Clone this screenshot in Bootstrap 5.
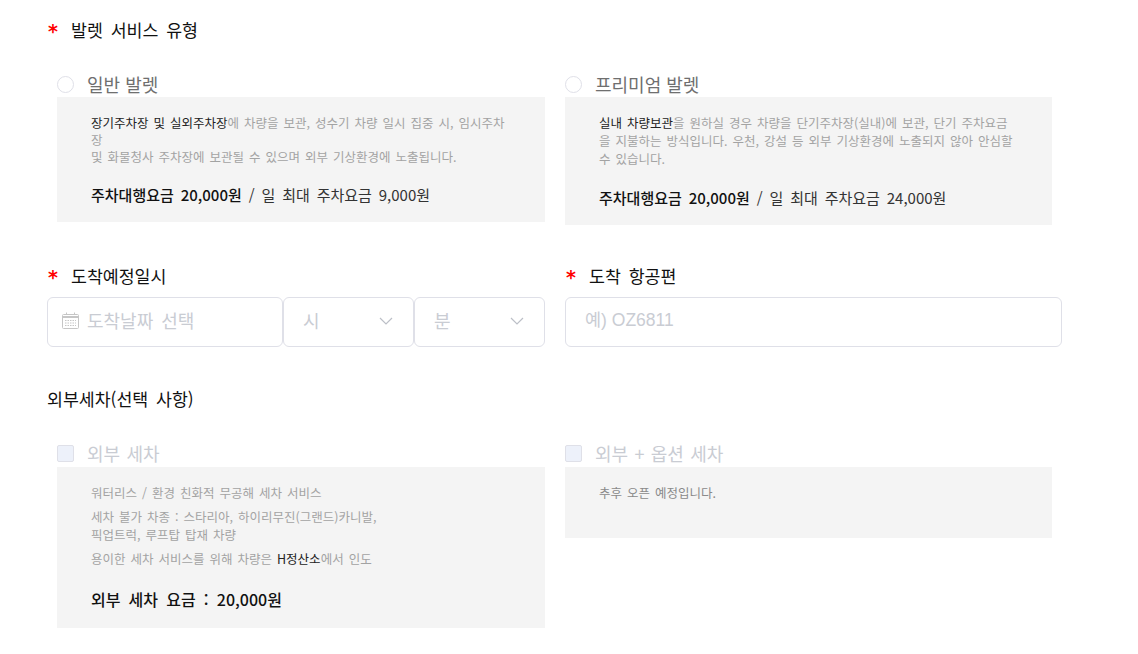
<!DOCTYPE html>
<html lang="ko">
  <head>
    <meta charset="UTF-8" />
    <title>발렛 서비스 예약</title>
    <link href="https://cdn.jsdelivr.net/npm/bootstrap@5.3.3/dist/css/bootstrap.min.css" rel="stylesheet" />
    <style>
      body {
        font-family: "Noto Sans CJK KR", "Liberation Sans", sans-serif;
        color: #111;
        background: #fff;
        overflow: hidden;
      }
      .page-wrap {
        width: 1015px;
        margin-left: 47px;
        padding-top: 17px;
      }
      .two-cols {
        display: grid;
        grid-template-columns: 498px 497px;
        column-gap: 20px;
      }
      .field-title {
        font-size: 17.3px;
        line-height: 26px;
        word-spacing: 3px;
        margin: 0;
      }
      .req-mark {
        color: #f00;
        display: inline-block;
        width: 24px;
        padding-left: 1px;
        font-family: "DejaVu Sans", sans-serif;
        font-weight: 700;
        font-size: 19px;
        line-height: 20px;
        vertical-align: -1px;
      }
      .opt-head {
        height: 24px;
        padding-bottom: 2px;
        font-size: 18px;
        line-height: 22px;
        color: #6f6f6f;
      }
      .first-col {
        margin-left: 10px;
      }
      .opt-head.off {
        padding-bottom: 4px;
        word-spacing: 1.3px;
        color: #c9ccd3;
      }
      .radio-mark, .check-mark {
        width: 17px;
        height: 17px;
        margin-right: 13px;
        border: 1px solid #dfe0e8;
        flex: none;
      }
      .radio-mark {
        border-radius: 50%;
      }
      .check-mark {
        border-radius: 2px;
        background: #edf1fa;
      }
      .opt-panel {
        background: #f4f4f4;
        font-size: 12.5px;
        line-height: 18px;
        word-spacing: 1.5px;
        color: #a3a3a3;
        padding: 17px 34px 0;
      }
      .last-col {
        margin-right: 10px;
      }
      .opt-panel b {
        font-weight: 400;
        color: #222;
      }
      .opt-panel p {
        margin: 0;
      }
      .opt-panel p.gap-after {
        margin-bottom: 6px;
      }
      .opt-panel p.fee-line {
        font-size: 15px;
        line-height: 22px;
        word-spacing: 2.7px;
        color: #333;
        margin-top: 19px;
      }
      .fee-line b {
        font-weight: 500;
        color: #111;
      }
      .opt-panel p.fee-wash {
        font-size: 16px;
        word-spacing: 3.7px;
        margin-top: 20px;
      }
      .wash-note {
        color: #8a8a8a;
      }
      .box-input {
        height: 50px;
        padding-bottom: 3px;
        border: 1px solid #dfe0e8;
        border-radius: 6px;
        font-size: 18px;
        word-spacing: 3px;
        color: #c9ccd3;
        background: #fff;
      }
      .box-date {
        width: 236px;
        padding-left: 14px;
      }
      .box-select {
        width: 131px;
        padding-left: 19px;
        padding-right: 20px;
      }
      .flight-input {
        font-family: "Liberation Sans", "Noto Sans CJK KR", sans-serif;
        font-size: 17.5px;
        word-spacing: 0;
        padding-left: 19px;
      }
      .service-row { margin-top: 30px; }
      .panel-a { height: 125px; line-height: 17px; }
      .panel-b { height: 128px; }
      .arrival-row { margin-top: 38px; }
      .wash-title { margin-top: 39px; }
      .wash-row { margin-top: 31px; }
      .panel-c { height: 161px; }
      .panel-d { height: 71px; }
    </style>
  </head>
  <body>
    <div class="page-wrap">
      <h6 class="field-title fw-normal"><span class="req-mark">*</span>발렛 서비스 유형</h6>

      <div class="two-cols service-row">
        <div class="first-col">
          <div class="opt-head d-flex align-items-center"><span class="radio-mark"></span>일반 발렛</div>
          <div class="opt-panel panel-a">
            <p><b>장기주차장 및 실외주차장</b>에 차량을 보관, 성수기 차량 일시 집중 시, 임시주차장<br />및 화물청사 주차장에 보관될 수 있으며 외부 기상환경에 노출됩니다.</p>
            <p class="fee-line"><b>주차대행요금 20,000원</b> / 일 최대 주차요금 9,000원</p>
          </div>
        </div>
        <div class="last-col">
          <div class="opt-head d-flex align-items-center"><span class="radio-mark"></span>프리미엄 발렛</div>
          <div class="opt-panel panel-b">
            <p><b>실내 차량보관</b>을 원하실 경우 차량을 단기주차장(실내)에 보관, 단기 주차요금을 지불하는 방식입니다. 우천, 강설 등 외부 기상환경에 노출되지 않아 안심할 수 있습니다.</p>
            <p class="fee-line"><b>주차대행요금 20,000원</b> / 일 최대 주차요금 24,000원</p>
          </div>
        </div>
      </div>

      <div class="two-cols arrival-row">
        <div>
          <h6 class="field-title fw-normal mb-2"><span class="req-mark">*</span>도착예정일시</h6>
          <div class="d-flex">
            <div class="box-input box-date d-flex align-items-center gap-2">
              <svg width="17" height="17" viewBox="0 0 17 17" fill="none" stroke="#c6c6c6">
                <rect x="0.5" y="2.5" width="16" height="14" rx="1" />
                <path d="M1 5h15" stroke-width="2" />
                <path d="M4.5 0.5v2M12.5 0.5v2" />
                <path d="M3 8.5h11M3 11h11M3 13.5h11" stroke-dasharray="1.5 1" />
              </svg>
              <span>도착날짜 선택</span>
            </div>
            <div class="box-input box-select d-flex align-items-center justify-content-between">
              <span>시</span>
              <svg width="14" height="8" viewBox="0 0 14 8" fill="none" stroke="#bcbfc7" stroke-width="1.2"><path d="M1 1l6 6 6-6" /></svg>
            </div>
            <div class="box-input box-select d-flex align-items-center justify-content-between">
              <span>분</span>
              <svg width="14" height="8" viewBox="0 0 14 8" fill="none" stroke="#bcbfc7" stroke-width="1.2"><path d="M1 1l6 6 6-6" /></svg>
            </div>
          </div>
        </div>
        <div>
          <h6 class="field-title fw-normal mb-2"><span class="req-mark">*</span>도착 항공편</h6>
          <div class="box-input flight-input d-flex align-items-center">예) OZ6811</div>
        </div>
      </div>

      <h6 class="field-title fw-normal wash-title">외부세차(선택 사항)</h6>

      <div class="two-cols wash-row">
        <div class="first-col">
          <div class="opt-head off d-flex align-items-center"><span class="check-mark"></span>외부 세차</div>
          <div class="opt-panel panel-c">
            <p class="gap-after">워터리스 / 환경 친화적 무공해 세차 서비스</p>
            <p class="gap-after">세차 불가 차종 : 스타리아, 하이리무진(그랜드)카니발,<br />픽업트럭, 루프탑 탑재 차량</p>
            <p>용이한 세차 서비스를 위해 차량은 <b>H정산소</b>에서 인도</p>
            <p class="fee-line fee-wash"><b>외부 세차 요금 : 20,000원</b></p>
          </div>
        </div>
        <div class="last-col">
          <div class="opt-head off d-flex align-items-center"><span class="check-mark"></span>외부 + 옵션 세차</div>
          <div class="opt-panel panel-d">
            <p class="wash-note">추후 오픈 예정입니다.</p>
          </div>
        </div>
      </div>
    </div>
  </body>
</html>
